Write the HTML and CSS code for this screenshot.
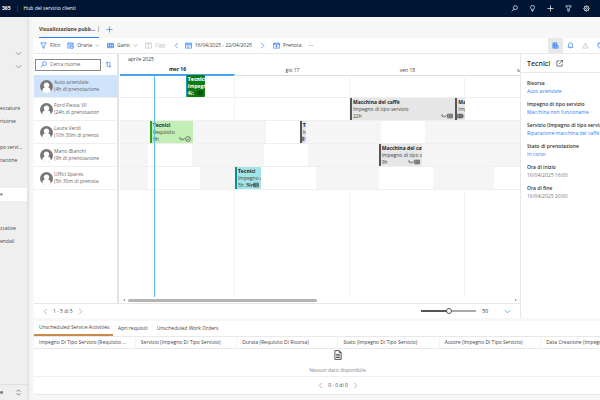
FILE: index.html
```html
<!DOCTYPE html>
<html lang="it">
<head>
    <meta charset="UTF-8">
    <meta name="viewport" content="width=device-width, initial-scale=1.0">
    <title>Hub del servizio clienti</title>
    <link rel="stylesheet" href="styles.css">
</head>
<body>
    <!-- icone condivise -->
    <svg class="sprite" aria-hidden="true">
        <symbol id="i-search" viewBox="0 0 16 16"><circle cx="10" cy="6" r="4.5"/><path d="M7 9 1.5 14.5"/></symbol>
        <symbol id="i-bulb" viewBox="0 0 16 16"><path d="M6 11C6 9 3.5 8 3.5 5.500a4.500 4.500 0 0 1 9 0C12.500 8 10 9 10 11zM6 13h4M7 15h2"/></symbol>
        <symbol id="i-plus" viewBox="0 0 16 16"><path d="M8 1v14M1 8h14"/></symbol>
        <symbol id="i-funnel" viewBox="0 0 16 16"><path d="M1.500 2h13L9.500 8.500V14h-3V8.500z"/></symbol>
        <symbol id="i-gear" viewBox="0 0 16 16"><circle cx="8" cy="8" r="5.500"/><circle cx="8" cy="8" r="2"/><path d="M8 1v2M8 13v2M1 8h2M13 8h2M3 3l1.500 1.500M11.500 11.500 13 13M13 3l-1.500 1.500M4.500 11.500 3 13"/></symbol>
        <symbol id="i-down" viewBox="0 0 16 16"><path d="M2 5l6 6 6-6"/></symbol>
        <symbol id="i-left" viewBox="0 0 16 16"><path d="M11 2 5 8l6 6"/></symbol>
        <symbol id="i-right" viewBox="0 0 16 16"><path d="M5 2l6 6-6 6"/></symbol>
        <symbol id="i-updown" viewBox="0 0 16 16"><path d="M4 6l4-4 4 4M4 10l4 4 4-4"/></symbol>
        <symbol id="i-sort" viewBox="0 0 16 16"><path d="M5 14V2M2 5l3-3 3 3M11 2v12M8 11l3 3 3-3"/></symbol>
        <symbol id="i-hourly" viewBox="0 0 16 16"><path d="M7 14H2V2h12v5M2 5h12M5 8h3M5 11h2"/><circle cx="11.500" cy="11.500" r="3.500"/><path d="M11.500 9.500v2h2"/></symbol>
        <symbol id="i-board" viewBox="0 0 16 16"><path d="M1 3h14v10H1zM1 6h14M6 3v10M11 3v10M1 10h14"/></symbol>
        <symbol id="i-today" viewBox="0 0 16 16"><path d="M1 3h14v11H1zM8 3v11M4 1v4M12 1v4"/></symbol>
        <symbol id="i-calendar" viewBox="0 0 16 16"><path d="M1 3h14v11H1zM1 6h14M4 1v3M12 1v3M4 9h2M7 9h2M10 9h2M4 11.500h2M7 11.500h2"/></symbol>
        <symbol id="i-book" viewBox="0 0 16 16"><path d="M1 3h14v11H1zM1 6h14M4 1v3M12 1v3M8 7.500v5M5.500 10h5"/></symbol>
        <symbol id="i-details" viewBox="0 0 16 16"><path d="M2 2h9v12H2zM2 5h9M2 8h9M2 11h9M6 2v12M11 8h3v6h-3"/></symbol>
        <symbol id="i-bell" viewBox="0 0 16 16"><path d="M2 12h12l-1.500-2V6.500a4.500 4.500 0 0 0-9 0V10zM6.500 12.500a1.500 1.500 0 0 0 3 0"/></symbol>
        <symbol id="i-warn" viewBox="0 0 16 16"><path d="M8 2l6.500 12h-13zM8 6v4M8 11.500v1"/></symbol>
        <symbol id="i-refresh" viewBox="0 0 16 16"><path d="M12 3.500a6 6 0 1 1-7-.5M5 0v4H1"/></symbol>
        <symbol id="i-open" viewBox="0 0 16 16"><path d="M8 2H2v12h12V9M10 1h5v5M15 1 7 9"/></symbol>
        <symbol id="i-doc" viewBox="0 0 16 16"><path d="M3 1h7l3 3v11H3zM10 1v3h3M5 7h6M5 9.500h6M5 12h6"/></symbol>
        <symbol id="i-link" viewBox="0 0 16 16"><path d="M1 5l4 6 3-4 3 4 4-6M1 5h4"/></symbol>
        <symbol id="i-check" viewBox="0 0 16 16"><circle cx="8" cy="8" r="6.500"/><path d="M5 8l2 2.500L11 6"/></symbol>
        <symbol id="i-person" viewBox="0 0 16 16"><circle class="disc" cx="8" cy="8" r="8"/><path class="figure" d="M8 3a3.200 3.200 0 0 1 1.800 5.900C12 9.600 13.200 11.500 13.200 14a8 8 0 0 1-10.400 0c0-2.500 1.200-4.400 3.400-5.100A3.200 3.200 0 0 1 8 3z"/></symbol>
    </svg>

    <header class="topbar">
        <strong class="suite">365</strong>
        <span class="app-name">Hub del servizio clienti</span>
        <nav class="top-actions">
            <button aria-label="Cerca"><svg class="icon"><use href="#i-search"/></svg></button>
            <button aria-label="Novità"><svg class="icon"><use href="#i-bulb"/></svg></button>
            <button aria-label="Nuovo"><svg class="icon"><use href="#i-plus"/></svg></button>
            <button aria-label="Filtro"><svg class="icon"><use href="#i-funnel"/></svg></button>
            <button aria-label="Impostazioni"><svg class="icon"><use href="#i-gear"/></svg></button>
        </nav>
    </header>

    <div class="shell">
        <nav class="sidebar">
            <button class="group first" aria-label="Espandi"><svg class="icon"><use href="#i-down"/></svg></button>
            <button class="group" aria-label="Espandi"><svg class="icon"><use href="#i-down"/></svg></button>
            <a class="area-start" href="#">ezzature</a>
            <a href="#">risorse</a>
            <span class="blank"></span>
            <a href="#">po servi...</a>
            <a href="#">razione</a>
            <span class="blank tall"></span>
            <a class="active" href="#">e</a>
            <span class="blank tall"></span>
            <a href="#">zzative</a>
            <a href="#">endali</a>
            <button class="switcher"><b>e</b><svg class="icon"><use href="#i-updown"/></svg></button>
        </nav>

        <main>
            <div class="view-tabs">
                <button class="view-tab">Visualizzazione pubb...</button>
                <button class="add" aria-label="Aggiungi"><svg class="icon"><use href="#i-plus"/></svg></button>
            </div>

            <div class="toolbar">
                <button><svg class="icon"><use href="#i-funnel"/></svg>Filtri</button>
                <button><svg class="icon"><use href="#i-hourly"/></svg>Oraria<svg class="icon chevron"><use href="#i-down"/></svg></button>
                <button><svg class="icon"><use href="#i-board"/></svg>Gantt<svg class="icon chevron"><use href="#i-down"/></svg></button>
                <button disabled><svg class="icon"><use href="#i-today"/></svg>Oggi</button>
                <button aria-label="Precedente"><svg class="icon"><use href="#i-left"/></svg></button>
                <button class="range"><svg class="icon"><use href="#i-calendar"/></svg>16/04/2025 - 22/04/2025</button>
                <button aria-label="Successivo"><svg class="icon"><use href="#i-right"/></svg></button>
                <button><svg class="icon"><use href="#i-book"/></svg>Prenota</button>
                <button class="more" aria-label="Altro">•••</button>
                <div class="tools">
                    <button class="on" aria-label="Dettagli"><svg class="icon"><use href="#i-details"/></svg></button>
                    <button aria-label="Notifiche"><svg class="icon"><use href="#i-bell"/></svg></button>
                    <button aria-label="Avvisi" disabled><svg class="icon"><use href="#i-warn"/></svg></button>
                    <button aria-label="Aggiorna"><svg class="icon"><use href="#i-refresh"/></svg></button>
                </div>
            </div>

            <div class="workspace">
                <section class="board">
                    <div class="schedule">
                        <div class="resources">
                            <div class="resource-search">
                                <label class="search-box"><svg class="icon"><use href="#i-search"/></svg><input type="text" placeholder="Cerca risorse" aria-label="Cerca risorse"></label>
                                <button aria-label="Ordina"><svg class="icon"><use href="#i-sort"/></svg></button>
                            </div>
                            <ul class="lanes">
                                <li class="resource selected"><svg class="avatar"><use href="#i-person"/></svg><p>Auto aziendale<br>(4h di prenotazione)</p></li>
                                <li class="resource"><svg class="avatar"><use href="#i-person"/></svg><p>Ford Fiesta VII<br>(24h di prenotazione)</p></li>
                                <li class="resource"><svg class="avatar"><use href="#i-person"/></svg><p>Laura Verdi<br>(10h 30m di prenotazione)</p></li>
                                <li class="resource"><svg class="avatar"><use href="#i-person"/></svg><p>Mario Bianchi<br>(9h di prenotazione)</p></li>
                                <li class="resource"><svg class="avatar"><use href="#i-person"/></svg><p>Uffici Spaces<br>(5h 30m di prenotazione)</p></li>
                            </ul>
                        </div>

                        <div class="timeline">
                            <div class="month">aprile 2025</div>
                            <div class="days quarters">
                                <span class="day today">mer 16</span>
                                <span class="day">gio 17</span>
                                <span class="day">ven 18</span>
                                <span class="day rest">sab 19</span>
                            </div>
                            <div class="canvas">
                                <div class="day-lines quarters"><i></i><i></i><i></i></div>
                                <div class="lanes" id="lanes"></div>
                                <div class="now"></div>
                            </div>
                            <div class="scroller"><span class="arrow-left"></span><span class="thumb"></span><span class="arrow-right"></span></div>
                        </div>
                    </div>

                    <div class="board-footer">
                        <div class="pager"><button aria-label="Indietro"><svg class="icon"><use href="#i-left"/></svg></button>1 - 5 di 5<button aria-label="Avanti"><svg class="icon"><use href="#i-right"/></svg></button></div>
                        <input class="zoom" type="range" min="0" max="100" value="50" aria-label="Zoom">
                        <output>50</output>
                        <button class="collapse" aria-label="Comprimi"><svg class="icon"><use href="#i-down"/></svg></button>
                    </div>
                </section>

                <aside class="details">
                    <h2>Tecnici <a href="#" aria-label="Apri"><svg class="icon"><use href="#i-open"/></svg></a></h2>
                    <dl>
                        <dt>Risorsa</dt><dd><a href="#">Auto aziendale</a></dd>
                        <dt>Impegno di tipo servizio</dt><dd><a href="#">Macchina non funzionante</a></dd>
                        <dt>Servizio (Impegno di tipo servizio)</dt><dd><a href="#">Riparazione macchina del caffè</a></dd>
                        <dt>Stato di prenotazione</dt><dd><a href="#">In corso</a></dd>
                        <dt>Ora di inizio</dt><dd>16/04/2025 16:00</dd>
                        <dt>Ora di fine</dt><dd>16/04/2025 20:00</dd>
                    </dl>
                </aside>
            </div>

            <section class="requirements">
                <div class="req-tabs">
                    <button class="current">Unscheduled Service Activities</button>
                    <button>Apri requisiti</button>
                    <button>Unscheduled Work Orders</button>
                </div>
                <table>
                    <thead>
                        <tr>
                            <th>Impegno Di Tipo Servizio (Requisito ...</th>
                            <th>Servizio (Impegno Di Tipo Servizio)</th>
                            <th>Durata (Requisito Di Risorsa)</th>
                            <th>Stato (Impegno Di Tipo Servizio)</th>
                            <th>Autore (Impegno Di Tipo Servizio)</th>
                            <th>Data Creazione (Impegno Di Tipo Servizio)</th>
                        </tr>
                    </thead>
                </table>
                <div class="empty"><svg class="icon"><use href="#i-doc"/></svg><p>Nessun dato disponibile.</p></div>
                <div class="pager req-pager"><button aria-label="Indietro"><svg class="icon"><use href="#i-left"/></svg></button>0 - 0 di 0<button aria-label="Avanti"><svg class="icon"><use href="#i-right"/></svg></button></div>
            </section>
        </main>
    </div>

    <script src="board.js"></script>
</body>
</html>
```
FILE: styles.css
```css
:root {
    --navy: #001433;
    --blue: #2f7cf6;
    --line: #e8e8e8;
    --off: #f5f5f5;
}
* {
    box-sizing: border-box;
}
body {
    margin: 0;
    height: 100vh;
    display: flex;
    flex-direction: column;
    overflow: hidden;
    font-family: "Open Sans", "Noto Sans", sans-serif;
    font-size: 5px;
    line-height: 7px;
    color: #444;
    background: #f7f7f7;
}
button, input {
    font: inherit;
    color: inherit;
    background: none;
    border: 0;
    padding: 0;
}
button {
    display: flex;
    align-items: center;
    white-space: nowrap;
}
a {
    color: var(--blue);
    text-decoration: none;
}
p, ul, dl, dd, h2 {
    margin: 0;
    padding: 0;
}
.sprite {
    position: absolute;
    width: 0;
    height: 0;
}
.icon {
    width: 7px;
    height: 7px;
    flex: none;
    fill: none;
    stroke: currentColor;
    stroke-width: 1.6;
}

/* barra superiore */
.topbar {
    flex: none;
    height: 17px;
    display: flex;
    align-items: center;
    background: var(--navy);
    color: #fff;
}
.suite {
    padding: 0 6px 0 2px;
    border-right: 1px solid #24344f;
}
.app-name {
    padding-left: 6px;
}
.top-actions {
    margin-left: auto;
    display: flex;
    gap: 11px;
    padding-right: 10px;
}

/* menu laterale */
.shell {
    flex: 1;
    min-height: 0;
    display: flex;
}
.sidebar {
    flex: none;
    width: 28px;
    display: flex;
    flex-direction: column;
    background: #efefef;
    border-right: 1px solid #e2e2e2;
    box-shadow: 0 0 4px rgba(0, 0, 0, 0.15);
}
.sidebar a, .blank {
    flex: none;
    height: 13px;
    line-height: 13px;
    color: #444;
    white-space: nowrap;
}
.sidebar .group {
    height: 13px;
    padding-left: 15px;
    color: #777;
}
.sidebar .first {
    margin-top: 30px;
}
.sidebar .area-start {
    margin-top: 29px;
}
.sidebar .tall {
    height: 21px;
}
.sidebar .active {
    background: #fff;
}
.sidebar .switcher {
    margin-top: auto;
    height: 16px;
    justify-content: space-between;
    padding-right: 5px;
    border-top: 1px solid #e0e0e0;
}

main {
    flex: 1;
    min-width: 0;
    display: flex;
    flex-direction: column;
    padding-bottom: 5px;
    margin-left: 6px;
    overflow: hidden;
}
.view-tabs {
    flex: none;
    height: 21px;
    display: flex;
    align-items: flex-end;
    padding-left: 5px;
}
.view-tab {
    height: 17px;
    width: 60px;
    font-weight: 700;
    border-bottom: 1px solid var(--blue);
}
.view-tab::after {
    content: "";
    height: 6px;
    margin-left: auto;
    border-right: 1px solid #bbb;
}
.view-tabs .add {
    height: 17px;
    padding-left: 7px;
    color: var(--blue);
}
.toolbar {
    flex: none;
    height: 16px;
    display: flex;
    align-items: center;
    gap: 7px;
    padding-left: 6px;
    background: #fff;
    border-bottom: 1px solid var(--line);
}
.toolbar button {
    gap: 3px;
}
.toolbar .icon {
    color: var(--blue);
}
.toolbar .chevron {
    width: 5px;
    color: #888;
}
.toolbar button:disabled, .toolbar button:disabled .icon {
    color: #c4c4c4;
}
.toolbar .range {
    margin-left: -2px;
}
.toolbar .more {
    color: #999;
    font-size: 4px;
}
.tools {
    margin-left: auto;
    display: flex;
    align-self: stretch;
    overflow: hidden;
    width: 52px;
}
.tools button {
    flex: none;
    width: 15px;
    justify-content: center;
}
.tools .on {
    background: #e8e8e8;
}

/* area di pianificazione */
.workspace {
    flex: 1;
    min-height: 0;
    display: flex;
    background: #fff;
}
.board {
    flex: 1;
    min-width: 0;
    display: flex;
    flex-direction: column;
}
.schedule {
    flex: 1;
    min-height: 0;
    display: flex;
}
.resources {
    flex: none;
    width: 85px;
    border-right: 2px solid #e2e2e6;
    margin-right: 1px;
}
.resource-search {
    height: 21px;
    display: flex;
    align-items: center;
    gap: 4px;
    padding-left: 1px;
    color: var(--blue);
}
.search-box {
    width: 66px;
    height: 12px;
    display: flex;
    align-items: center;
    gap: 3px;
    padding-left: 4px;
    border: 1px solid #888;
}
.search-box input {
    min-width: 0;
    width: 100%;
    color: #555;
    outline: 0;
}
.search-box input::placeholder {
    color: #666;
}
.lanes {
    height: 115px;
    display: grid;
    grid-template-rows: repeat(5, 1fr);
    list-style: none;
}
.resource {
    min-width: 0;
    display: flex;
    align-items: center;
    gap: 1px;
    padding: 0 18px 0 6px;
    border-bottom: 1px solid #efefef;
    color: #666;
}
.resource p {
    overflow: hidden;
    white-space: nowrap;
}
.selected {
    background: #cfe3fb;
}
.avatar {
    flex: none;
    width: 13px;
    height: 13px;
}
.disc {
    fill: #777;
}
.figure {
    fill: #fff;
}

.timeline {
    flex: 1;
    min-width: 0;
    display: flex;
    flex-direction: column;
    overflow: hidden;
}
.month {
    height: 11px;
    line-height: 11px;
    padding-left: 8px;
}
/* una colonna per ogni quarto d'ora visibile */
.quarters, .lane {
    display: grid;
    grid-template-columns: repeat(334, minmax(0, 1fr));
}
.days {
    height: 10px;
    line-height: 10px;
    text-align: center;
}
.day {
    grid-column: span 96;
    white-space: nowrap;
    border-bottom: 1px solid #ddd;
}
.day.today {
    font-weight: 700;
    line-height: 9px;
    color: #222;
    border-bottom: 2px solid #4aa3ee;
}
.day.rest {
    grid-column: span 46;
    padding-left: 52px;
    overflow: hidden;
    text-align: left;
}
.canvas {
    flex: 1;
    position: relative;
}
.day-lines {
    position: absolute;
    inset: 0;
}
.day-lines i {
    grid-column: span 96;
    border-right: 1px solid #f4f4f4;
}
.lane {
    border-bottom: 1px solid #efefef;
    grid-template-rows: 100%;
    min-height: 0;
}
.lane > * {
    grid-row: 1;
}
.closed {
    background: var(--off);
}
.booking {
    position: relative;
    min-width: 0;
    overflow: hidden;
    white-space: nowrap;
    padding-left: 1px;
    border-left: 2px solid #555;
    background: #e6e6e6;
    color: #444;
}
.booking b {
    display: block;
    color: #222;
    line-height: 8px;
}
.booking span {
    display: block;
}
.booking .marks {
    position: absolute;
    right: 2px;
    bottom: 1px;
    display: flex;
}
.marks .icon {
    width: 6px;
    height: 6px;
}
.booking.green {
    background: #107c10;
    border-left: 1px solid #1b9ab0;
    border-radius: 1px;
    color: #fff;
    font-weight: 700;
}
.booking.green b {
    color: #fff;
}
.green .marks {
    color: #063f06;
}
.booking.lime {
    background: #c3eeb4;
    border-left-color: #2e9e1c;
}
.booking.teal {
    background: #a2e5e9;
    border-left-color: #0a8f96;
}
.now {
    position: absolute;
    top: 0;
    bottom: 0;
    left: 34px;
    width: 1px;
    background: #5ebcf5;
}
.scroller {
    flex: none;
    height: 6px;
    display: flex;
    align-items: center;
    padding: 0 3px;
    gap: 3px;
}
.thumb {
    width: 48%;
    height: 3px;
    border-radius: 2px;
    background: #b4b4b4;
}
.arrow-left, .arrow-right {
    border: 1px solid transparent;
    border-right: 2px solid #888;
    border-left: 0;
}
.arrow-right {
    margin-left: auto;
    border-right: 0;
    border-left: 2px solid #888;
}
.board-footer {
    flex: none;
    height: 15px;
    display: flex;
    align-items: center;
    border-top: 1px solid var(--line);
    padding: 0 9px 0 8px;
}
.pager {
    display: flex;
    align-items: center;
    gap: 4px;
}
.pager .icon {
    color: #999;
}
.zoom {
    appearance: none;
    margin: 0 6px 0 auto;
    width: 55px;
    height: 6px;
}
.zoom::-webkit-slider-runnable-track {
    height: 2px;
    background: linear-gradient(to right, #555 50%, #aaa 50%);
}
.zoom::-webkit-slider-thumb {
    appearance: none;
    width: 6px;
    height: 6px;
    margin-top: -2px;
    border: 1px solid #555;
    border-radius: 50%;
    background: #fff;
}
output {
    color: #222;
}
.collapse {
    margin-left: 16px;
    color: var(--blue);
}

/* pannello dettagli */
.details {
    flex: none;
    width: 80px;
    overflow: hidden;
    white-space: nowrap;
    border-left: 1px solid var(--line);
}
.details h2 {
    height: 19px;
    display: flex;
    align-items: center;
    gap: 6px;
    padding-left: 6px;
    font-size: 7px;
    font-weight: 600;
    color: #333;
    border-bottom: 1px solid var(--line);
}
.details h2 a {
    display: flex;
    color: #444;
}
.details dl {
    padding: 6px 0 0 6px;
}
.details dt {
    font-weight: 600;
    color: #333;
    line-height: 8px;
}
.details dd {
    margin-bottom: 5px;
    line-height: 8px;
    color: #777;
}

/* requisiti non pianificati: la griglia prosegue oltre il bordo destro */
.requirements {
    flex: none;
    margin: 3px -42px 0 0;
    background: #fff;
    border-bottom: 1px solid var(--line);
}
.req-tabs {
    height: 15px;
    display: flex;
}
.req-tabs button {
    padding: 0 4px 0 5px;
}
.req-tabs .current {
    width: 79px;
    border-bottom: 2px solid #c98a4a;
}
table {
    width: 100%;
    table-layout: fixed;
    border-collapse: collapse;
    border-top: 1px solid var(--line);
    border-bottom: 1px solid var(--line);
}
th {
    height: 12px;
    padding: 0 0 0 5px;
    overflow: hidden;
    white-space: nowrap;
    text-align: left;
    font-weight: 400;
}
th + th {
    border-left: 1px solid #f3f3f3;
}
.empty {
    height: 28px;
    display: flex;
    flex-direction: column;
    align-items: center;
    gap: 7px;
    padding-top: 1px;
    color: #888;
    border-bottom: 1px solid #f0f0f0;
}
.empty .icon {
    width: 10px;
    height: 10px;
    color: #555;
}
.req-pager {
    height: 17px;
    justify-content: center;
}
```
FILE: board.js
```js
// start e span sono in quarti d'ora dall'inizio della finestra visibile
const lanes = [
    {
        closed: [],
        bookings: [{ start: 55, span: 16, type: 'green', title: 'Tecnici', text: 'Impegno di tipo servizio', time: '4h', mark: 'board' }]
    },
    {
        closed: [],
        bookings: [
            { start: 192, span: 88, type: '', title: 'Macchina del caffè', text: 'Impegno di tipo servizio', time: '22h', mark: 'board' },
            { start: 280, span: 8, type: '', title: 'Macchina del caffè', text: 'Impegno di tipo servizio', time: '2h', mark: 'board' }
        ]
    },
    {
        closed: [[0, 25], [61, 61], [155, 63], [255, 79]],
        bookings: [
            { start: 25, span: 36, type: 'lime', title: 'Tecnici', text: 'Requisito', time: '9h', mark: 'check' },
            { start: 150, span: 5, type: '', title: 'Tecnici', text: 'Impegno', time: '1h 30m', mark: 'board' }
        ]
    },
    {
        closed: [[0, 23], [60, 60], [157, 59], [252, 82]],
        bookings: [{ start: 216, span: 36, type: '', title: 'Macchina del caffè', text: 'Impegno di tipo servizio', time: '9h', mark: 'board' }]
    },
    {
        closed: [[0, 23], [67, 29], [164, 52], [261, 51]],
        bookings: [{ start: 96, span: 22, type: 'teal', title: 'Tecnici', text: 'Impegno di tipo servizio', time: '5h 30m', mark: 'board' }]
    }
];

document.getElementById('lanes').innerHTML = lanes.map(lane => `
    <div class="lane">
        ${lane.closed.map(([start, span]) => `<div class="closed" style="grid-column: ${start + 1} / span ${span}"></div>`).join('')}
        ${lane.bookings.map(b => `
            <div class="booking ${b.type}" style="grid-column: ${b.start + 1} / span ${b.span}">
                <b>${b.title}</b><span>${b.text}</span><span>${b.time}</span>
                <div class="marks"><svg class="icon"><use href="#i-link"/></svg><svg class="icon"><use href="#i-${b.mark}"/></svg></div>
            </div>`).join('')}
    </div>`).join('');
```
